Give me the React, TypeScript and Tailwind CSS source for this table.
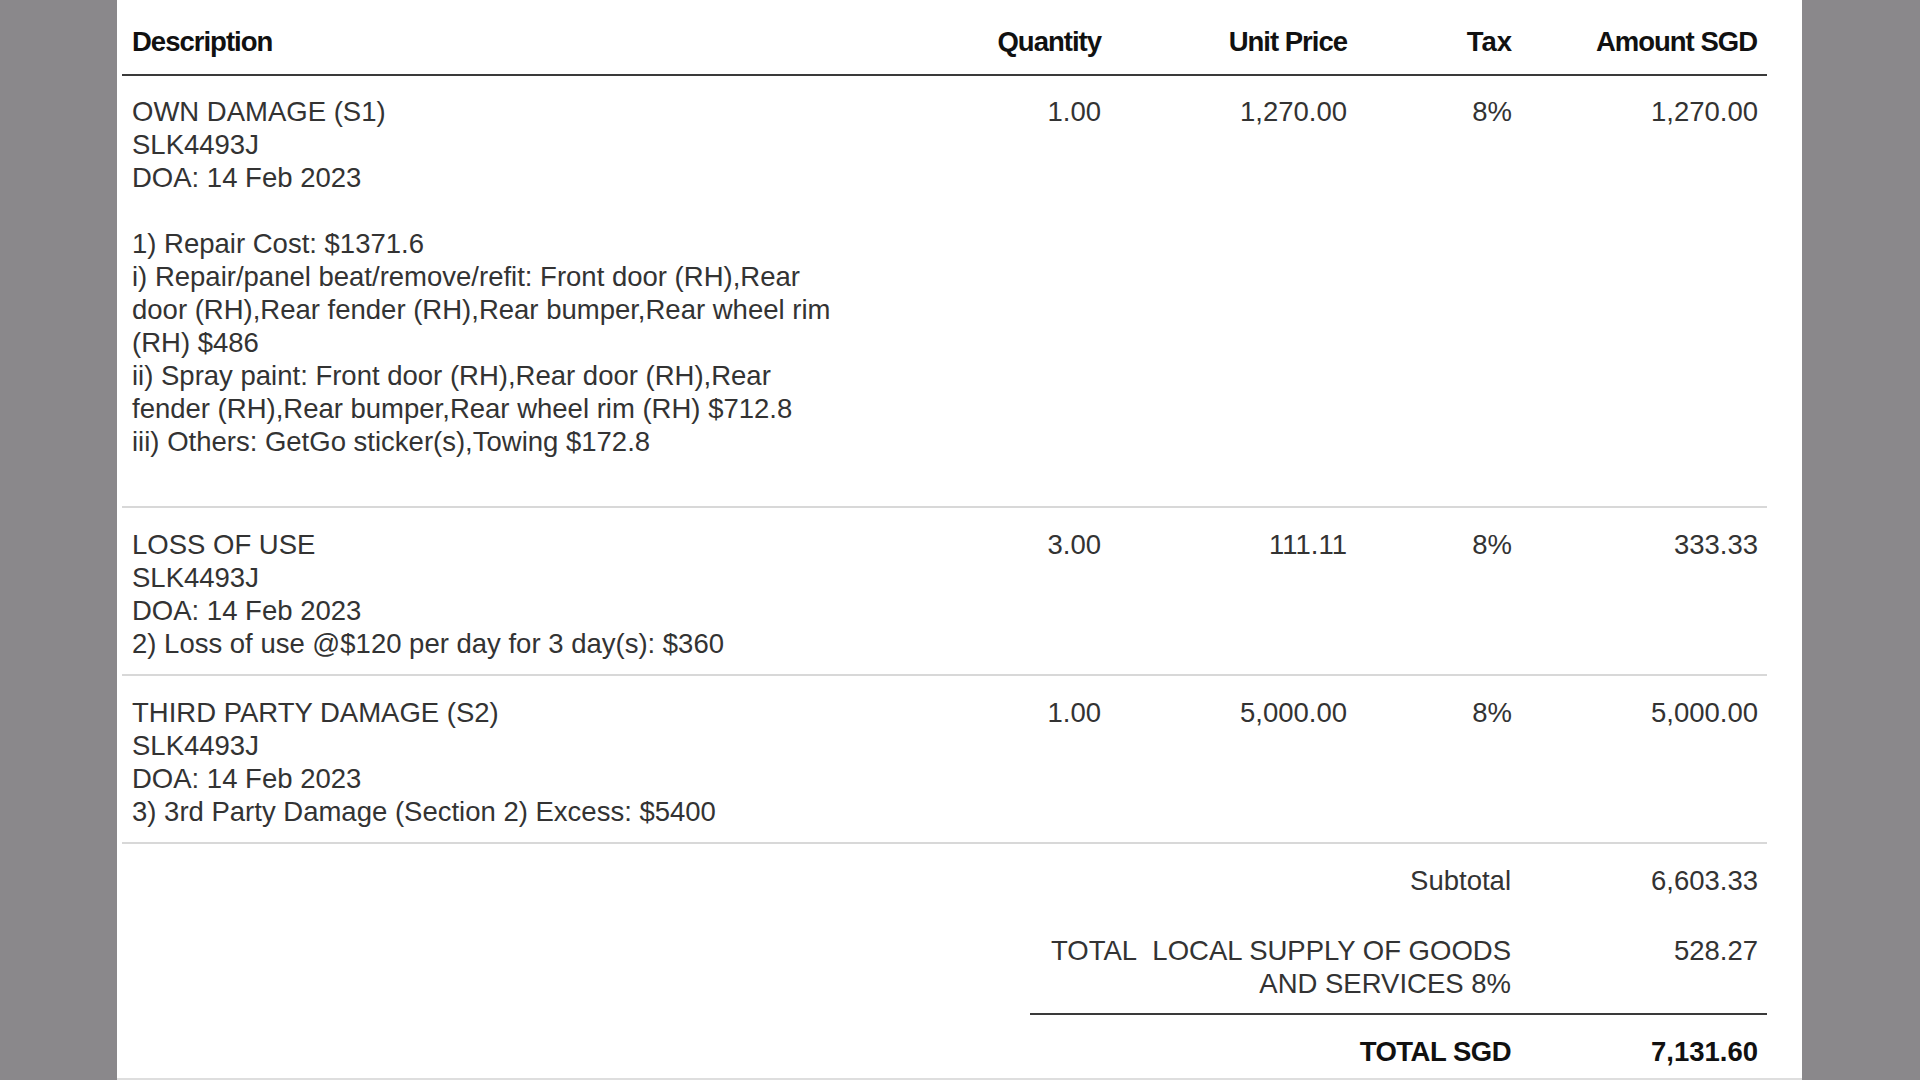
import React from "react";

type Item = {
  lines: string[];
  qty: string;
  price: string;
  tax: string;
  amount: string;
};

const items: Item[] = [
  {
    lines: [
      "OWN DAMAGE (S1)",
      "SLK4493J",
      "DOA: 14 Feb 2023",
      "",
      "1) Repair Cost: $1371.6",
      "i) Repair/panel beat/remove/refit: Front door (RH),Rear door (RH),Rear fender (RH),Rear bumper,Rear wheel rim (RH) $486",
      "ii) Spray paint: Front door (RH),Rear door (RH),Rear fender (RH),Rear bumper,Rear wheel rim (RH) $712.8",
      "iii) Others: GetGo sticker(s),Towing $172.8",
      "",
    ],
    qty: "1.00",
    price: "1,270.00",
    tax: "8%",
    amount: "1,270.00",
  },
  {
    lines: [
      "LOSS OF USE",
      "SLK4493J",
      "DOA: 14 Feb 2023",
      "2) Loss of use @$120 per day for 3 day(s): $360",
    ],
    qty: "3.00",
    price: "111.11",
    tax: "8%",
    amount: "333.33",
  },
  {
    lines: [
      "THIRD PARTY DAMAGE (S2)",
      "SLK4493J",
      "DOA: 14 Feb 2023",
      "3) 3rd Party Damage (Section 2) Excess: $5400",
    ],
    qty: "1.00",
    price: "5,000.00",
    tax: "8%",
    amount: "5,000.00",
  },
];

const cols = "grid grid-cols-[789px_200px_246px_165px_245px]";

const App: React.FC = () => {
  return (
    <div className="h-screen w-full overflow-hidden bg-[#8a888b] font-['Liberation_Sans',Arial,sans-serif] text-[27.5px] leading-[33px]">
      <div className="ml-[117px] h-full w-[1685px] border-b-2 border-[#dedede] bg-white pl-[5px]">
        <div className="w-[1645px]">
          {/* header */}
          <div className={`${cols} border-b-2 border-[#3a3a3a] pt-[25px] pb-[16px] font-bold tracking-[-1px] text-[#111]`}>
            <div className="px-[10px]">Description</div>
            <div className="px-[10px] text-right">Quantity</div>
            <div className="px-[10px] text-right">Unit Price</div>
            <div className="px-[10px] text-right tracking-normal">Tax</div>
            <div className="px-[10px] text-right">Amount SGD</div>
          </div>

          {items.map((it, i) => (
            <div
              key={i}
              className={`${cols} border-b-2 border-[#d8d8d8] ${i === 0 ? "pt-[19px] pb-[15px]" : "pt-5 pb-[14px]"} text-[#333]`}
            >
              <div className="px-[10px]">
                <div className="w-[712px]">
                  {it.lines.map((l, j) => (
                    <div key={j}>{l === "" ? "\u00A0" : l}</div>
                  ))}
                </div>
              </div>
              <div className="px-[10px] text-right">{it.qty}</div>
              <div className="px-[10px] text-right">{it.price}</div>
              <div className="px-[10px] text-right">{it.tax}</div>
              <div className="pl-[10px] pr-[9px] text-right">{it.amount}</div>
            </div>
          ))}

          {/* totals */}
          <div className="ml-[908px] w-[737px] text-[#333]">
            <div className="grid grid-cols-[491px_246px] pt-5">
              <div className="px-[10px] text-right">Subtotal</div>
              <div className="pl-[10px] pr-[9px] text-right">6,603.33</div>
            </div>
            <div className="grid grid-cols-[491px_246px] border-b-2 border-[#3a3a3a] pt-[37px] pb-[13px]">
              <div className="px-[10px] text-right">
                {"TOTAL\u00A0 LOCAL SUPPLY OF GOODS AND SERVICES 8%"}
              </div>
              <div className="pl-[10px] pr-[9px] text-right">528.27</div>
            </div>
            <div className="grid grid-cols-[491px_246px] pt-5 font-bold text-[#111]">
              <div className="px-[10px] text-right tracking-[-0.5px]">TOTAL SGD</div>
              <div className="pl-[10px] pr-[9px] text-right">7,131.60</div>
            </div>
          </div>
        </div>
      </div>
    </div>
  );
};

export default App;
